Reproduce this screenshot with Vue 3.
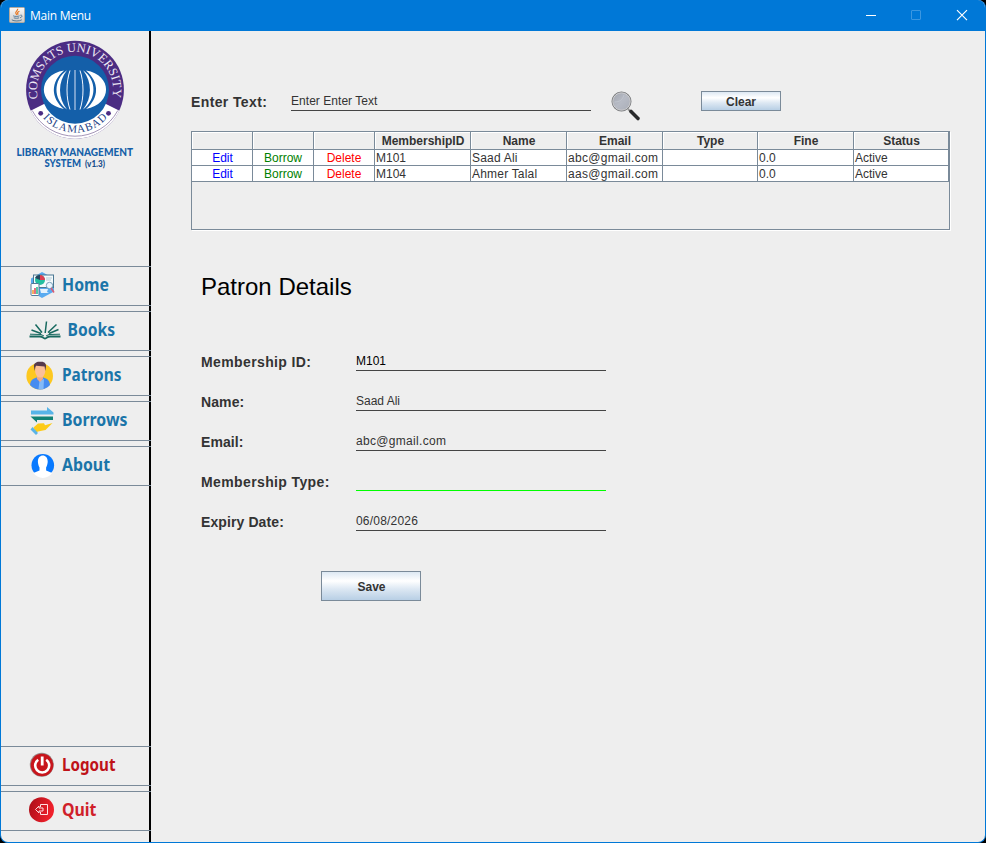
<script setup>
const nav = [
  { id: 'home', label: 'Home', x: 62, w: 47 },
  { id: 'books', label: 'Books', x: 67.5, w: 47.5 },
  { id: 'patrons', label: 'Patrons', x: 62, w: 59.5 },
  { id: 'borrows', label: 'Borrows', x: 62, w: 65.5 },
  { id: 'about', label: 'About', x: 62, w: 48 },
]
const exits = [
  { id: 'logout', label: 'Logout', x: 62, w: 53.5, color: '#bf1218' },
  { id: 'quit', label: 'Quit', x: 62, w: 34.5, color: '#d01f2a' },
]
const headers = ['', '', '', 'MembershipID', 'Name', 'Email', 'Type', 'Fine', 'Status']
const rows = [
  ['M101', 'Saad Ali', 'abc@gmail.com', '', '0.0', 'Active'],
  ['M104', 'Ahmer Talal', 'aas@gmail.com', '', '0.0', 'Active'],
]
const fields = [
  { label: 'Membership ID:', value: 'M101', cls: 'dark', wide: true },
  { label: 'Name:', value: 'Saad Ali', cls: '' },
  { label: 'Email:', value: 'abc@gmail.com', cls: 'mail' },
  { label: 'Membership Type:', value: '', cls: 'active', wide: true },
  { label: 'Expiry Date:', value: '06/08/2026', cls: 'date' },
]
</script>

<template>
  <div class="window">
    <header class="titlebar">
      <svg class="java" width="16" height="16" viewBox="0 0 16 16">
        <defs>
          <linearGradient id="jv" x1="0" y1="0" x2="0" y2="1">
            <stop offset="0" stop-color="#fafafa" /><stop offset="1" stop-color="#c9c9c9" />
          </linearGradient>
        </defs>
        <rect x=".5" y=".5" width="15" height="15" rx="1" fill="url(#jv)" stroke="#b3aaa0" />
        <path d="M8.600 1.800c.8 1.600-2.800 2.600-1.700 4.600l1 1.400M10.400 4.200c-2 .8-2.300 1.700-1.200 3.400" fill="none" stroke="#e8761e" stroke-width="1.200" />
        <path d="M4.200 8.800c1 .8 5 .8 6.400 0M4.800 10.800c1.500.6 4 .6 5.200 0M2.800 12.800c2 1.600 8 1.500 10 0M11.300 8.200c2.600-.4 2.200 2-.4 2.600" fill="none" stroke="#49708f" stroke-width=".9" />
      </svg>
      <span class="title">Main Menu</span>
      <svg class="controls" width="120" height="30" viewBox="0 0 120 30">
        <path d="M6 15.500h10" stroke="#fff" />
        <rect x="51.500" y="10.500" width="9" height="9" rx=".5" fill="none" stroke="#3b97e1" />
        <path d="M97 10.200l10 10M107 10.200l-10 10" stroke="#fff" stroke-width="1.150" />
      </svg>
    </header>

    <div class="body">
      <aside class="sidebar">
        <svg class="brand" width="148" height="235" viewBox="1 31 148 235">
          <defs>
            <path id="arcTop" d="M38.200 99.700A38.100 38.100 0 1 1 111.800 99.700" />
            <path id="arcBottom" d="M36.200 107.800A42.800 42.800 0 0 0 113.800 107.800" />
            <clipPath id="disc"><circle cx="75" cy="89.700" r="49" /></clipPath>
          </defs>
          <circle cx="75" cy="89.700" r="48.900" fill="#4b2c83" />
          <path clip-path="url(#disc)" d="M27 112.500L45 103.500A34 34 0 0 0 105 103.500L123 112.500V145H27Z" fill="#fff" />
          <path d="M32.200 110.500A48.500 48.500 0 0 0 117.800 110.500" fill="none" stroke="#8d7aa5" stroke-width=".8" />
          <circle cx="75" cy="89.700" r="34" fill="#145fa9" />
          <g fill="none" stroke="#f4f8ff">
            <path d="M75 70v40" stroke="#8eb0d8" stroke-width="1.600" />
            <path d="M70 70.500C66 82 66 98 70 109.500" stroke-width="1" />
            <path d="M80 70.500C84 82 84 98 80 109.500" stroke-width="1" />
          </g>
          <g fill="#fff">
            <path d="M64 70.500C37.200 75 37.200 104 64 109C50.500 98 50.500 82 64 70.500Z" />
            <path d="M86 70.500C112.800 75 112.800 104 86 109C99.500 98 99.500 82 86 70.500Z" />
            <path d="M67 70.200C53 80 53 99 67 109.500C57.700 98 57.700 82 67 70.200Z" />
            <path d="M83 70.200C97 80 97 99 83 109.500C92.300 98 92.300 82 83 70.200Z" />
          </g>
          <circle cx="40.700" cy="113.300" r="2.400" fill="#4b2c83" />
          <circle cx="108.500" cy="113.300" r="2.400" fill="#4b2c83" />
          <text class="ring" fill="#eee9f5" font-size="12.500"><textPath href="#arcTop" startOffset="1" textLength="136">COMSATS UNIVERSITY</textPath></text>
          <text class="ring" fill="#1d3f86" font-size="11"><textPath href="#arcBottom" startOffset="12" textLength="73">ISLAMABAD</textPath></text>
          <text class="caption" x="16.500" y="155.500" textLength="116.500" lengthAdjust="spacingAndGlyphs">LIBRARY MANAGEMENT</text>
          <text class="caption" x="44.500" y="167" textLength="36.500" lengthAdjust="spacingAndGlyphs">SYSTEM</text>
          <text class="caption ver" x="85" y="167" textLength="20" lengthAdjust="spacingAndGlyphs">(v1.3)</text>
        </svg>

        <nav class="group">
          <button v-for="n in nav" :key="n.id" class="nav">
            <svg width="150" height="38" viewBox="1 0 150 38">
              <g v-if="n.id === 'home'">
                <path d="M42 5l12 6.500v13L42 31l-11-6.500v-13z" fill="#58aaf0" />
                <rect x="33.500" y="8" width="20" height="12.500" fill="#f4fafc" stroke="#4b7792" />
                <circle cx="40" cy="13" r="5" fill="#23bfa0" />
                <path d="M40 13V8a5 5 0 0 1 5 5z" fill="#df3e52" /><path d="M40 13l-5-2a5 5 0 0 1 5-3z" fill="#24445f" />
                <path d="M46 11h6M46 13h5" stroke="#b5cad5" />
                <circle cx="49.500" cy="18.500" r="3.200" fill="#eaf6ff" stroke="#5f8da9" stroke-width=".8" />
                <path d="M51 21l3 4.500" stroke="#e05a70" stroke-width="1.500" />
                <path d="M40 22h8l-1 3 2 1h-8z" fill="#e4f1fc" />
                <rect x="31" y="16.500" width="8" height="12" rx="1" fill="#fff" stroke="#527b99" />
                <path d="M33 27v-4" stroke="#f49c38" stroke-width="1.600" /><path d="M35 27v-6" stroke="#df4d65" stroke-width="1.600" /><path d="M37 27v-7" stroke="#2ebd91" stroke-width="1.600" />
              </g>
              <g v-else-if="n.id === 'books'" fill="none" stroke="#17695f">
                <path d="M29.500 24.500h10.500c3 0 3 2 5 2s2-2 5-2h10.500" stroke-width="1.800" />
                <path d="M30 22.200l11 .3 3 1.500M60 22.200l-11 .3-3 1.500" stroke-width="1" />
                <path d="M35.500 12.500l6.500 8M31.500 18l9.500 3.500M46.500 9.500l-1.300 11.500M56.500 12.500l-8.500 8M58.500 17.500l-9.500 4" stroke-width="1.500" />
              </g>
              <g v-else-if="n.id === 'patrons'">
                <circle cx="39.700" cy="19" r="13.300" fill="#fdc820" />
                <path d="M30 28c.5-5 3-6.500 6.500-7.500h7c3.500 1 6 2.500 6.500 7.500a13.300 13.300 0 0 1-20 0z" fill="#468cf0" />
                <path d="M39.500 24l-1 8.200h5L44 22z" fill="#83baf8" />
                <path d="M37 16h6v6l-3 3-3-3z" fill="#f3aa83" />
                <path d="M35.200 8h10v7q-1 5.500-5 5.500t-5-5.500z" fill="#fabf99" />
                <path d="M34.700 14l-.8-5C34 6 37 4.300 40 4.800c4-.8 6.500 1.500 6 5l-.8 4.200-.6-4.500-8.500-.7-.7 1.200z" fill="#55394c" />
              </g>
              <g v-else-if="n.id === 'borrows'">
                <path d="M31 8.500h16V5l6.500 5.500v2H31z" fill="#57b4e8" />
                <path d="M53 14.500H30.500l6.500 6v-2.500h16z" fill="#128276" />
                <path d="M33.500 25.500l4.500-4 6-.3 1 2 7.500-2.200-7 7-7.500 1.500-2 1z" fill="#fdcb19" />
                <path d="M32.500 25l5.500 6-2 2-5.500-5.500z" fill="#5ab4e8" />
              </g>
              <g v-else>
                <circle cx="42.800" cy="18.300" r="11.300" fill="#0879ff" />
                <path d="M39.500 20.500c-3.500-7-.8-12 3.300-12s6.800 5 3.300 12v3l6.100 2.500a11.500 11.500 0 0 1-18.800 0l6.100-2.500z" fill="#fff" />
              </g>
              <text :x="n.x" y="24" :textLength="n.w" lengthAdjust="spacingAndGlyphs" fill="#1b75a9">{{ n.label }}</text>
            </svg>
          </button>
        </nav>

        <nav class="group exits">
          <button v-for="n in exits" :key="n.id" class="nav">
            <svg width="150" height="38" viewBox="1 0 150 38">
              <defs>
                <linearGradient :id="'rg-' + n.id" x1="0" y1="0" x2="1" y2=".3">
                  <stop offset="0" stop-color="#a90e18" /><stop offset="1" stop-color="#f0202b" />
                </linearGradient>
              </defs>
              <g v-if="n.id === 'logout'">
                <circle cx="41.800" cy="17.800" r="12" fill="#98898a" />
                <circle cx="42" cy="18" r="11.300" fill="#c8151c" />
                <path d="M38.200 12.700a7 7 0 1 0 8 0" fill="none" stroke="#fff" stroke-width="2.600" />
                <path d="M42.200 9.500v9" stroke="#fff" stroke-width="2.800" />
              </g>
              <g v-else>
                <circle cx="41.500" cy="17.700" r="12.500" fill="url(#rg-quit)" />
                <path d="M40.500 15v-2.500h7v10h-7V20M43 16h-4v-2l-3.500 3.500L39 21v-2h4z" fill="none" stroke="#ffdfe1" stroke-width="1" />
              </g>
              <text :x="n.x" y="24" :textLength="n.w" lengthAdjust="spacingAndGlyphs" :fill="n.color">{{ n.label }}</text>
            </svg>
          </button>
        </nav>
      </aside>

      <main class="content">
        <div class="search">
          <label class="lbl wide">Enter Text:</label>
          <div class="input">Enter Enter Text</div>
          <svg class="lens" width="30" height="31" viewBox="0 0 30 31">
            <defs>
              <linearGradient id="gl" x1="0" y1="0" x2="1" y2="1">
                <stop offset="0" stop-color="#a0a4ad" /><stop offset=".5" stop-color="#b7bbc5" /><stop offset="1" stop-color="#a9adb7" />
              </linearGradient>
            </defs>
            <path d="M17 18l3 3" stroke="#999" stroke-width="2" />
            <path d="M20 20.500l7 7" stroke="#292a2b" stroke-width="3.600" stroke-linecap="round" />
            <circle cx="10.500" cy="10.500" r="9.200" fill="url(#gl)" stroke="#77797c" stroke-width="1.600" />
            <circle cx="10.500" cy="10.500" r="8.700" fill="none" stroke="#dcdddf" stroke-width=".9" />
            <path d="M3.500 11c5 0 8-2 9.500-7" fill="none" stroke="#c3c8d0" stroke-width=".8" />
          </svg>
          <button class="btn clear">Clear</button>
        </div>

        <div class="pane">
          <div class="row head">
            <div v-for="(h, i) in headers" :key="i" class="cell">{{ h }}</div>
          </div>
          <div v-for="r in rows" :key="r[0]" class="row">
            <div class="cell act edit">Edit</div>
            <div class="cell act borrow">Borrow</div>
            <div class="cell act delete">Delete</div>
            <div v-for="(c, i) in r" :key="i" class="cell" :class="{ mail: i === 2, name: i === 1 }">{{ c }}</div>
          </div>
        </div>

        <h1>Patron Details</h1>
        <div class="form">
          <div v-for="f in fields" :key="f.label" class="field">
            <label class="lbl" :class="{ wide: f.wide }">{{ f.label }}</label>
            <div class="input" :class="f.cls">{{ f.value }}</div>
          </div>
        </div>
        <button class="btn save">Save</button>
      </main>
    </div>
  </div>
</template>

<style>
body { background: #000; }
</style>
<style scoped>
* { box-sizing: border-box; }
.window {
  width: 986px; height: 843px; background: #eee; border: 1px solid #0078d7; border-top: 0;
  border-radius: 8px; overflow: hidden; display: flex; flex-direction: column;
  font: 12px/14px "Liberation Sans", Arial, sans-serif; color: #333;
}
.titlebar { height: 31px; flex: none; background: #0078d7; display: flex; align-items: flex-start; padding-left: 8px; color: #fff; }
.java { margin-top: 7px; }
.title { font: 12px/16px "Open Sans", "Noto Sans", sans-serif; letter-spacing: -.25px; margin: 8px 0 0 5px; }
.controls { margin-left: auto; margin-right: 5px; }
.body { flex: 1; display: flex; min-height: 0; }
.sidebar { width: 150px; flex: none; display: flex; flex-direction: column; background: linear-gradient(90deg, transparent 148px, #000 148px); }
.brand { display: block; flex: none; }
.ring { font-family: "Liberation Serif", serif; }
.caption { font: 900 11px Lato, sans-serif; fill: #1560a8; }
.ver { font-size: 10px; fill: #174d8b; }
.group { display: flex; flex-direction: column; gap: 5px; }
.exits { margin-top: auto; margin-bottom: 11px; }
.nav { height: 40px; width: 150px; padding: 0; border: 0 solid #7a8a99; border-width: 1px 0; background: none; display: block; }
.nav svg { display: block; }
.nav text { font: bold 17px "Noto Sans", "Open Sans", sans-serif; }
.content { flex: 1; padding: 60px 0 0 40px; }
.search { display: flex; align-items: flex-start; height: 40px; }
.lbl { font-weight: bold; font-size: 14px; line-height: 16px; letter-spacing: .1px; white-space: nowrap; }
.lbl.wide { letter-spacing: .38px; }
.search .lbl { width: 100px; margin-top: 3px; }
.input { height: 20px; border-bottom: 1px solid #444; line-height: 14px; padding-top: 3px; }
.search .input { width: 300px; letter-spacing: .04px; }
.lens { margin: 0 0 0 20px; }
.btn { font: bold 12px/14px "Liberation Sans", Arial, sans-serif; color: #333; border: 1px solid #7a8a99; border-radius: 0; padding: 1px 0 0; display: block; background: linear-gradient(#dde8f3, #fff 32%, #dde8f3 60%, #b8cfe5); }
.clear { width: 80px; height: 20px; margin-left: 60px; }
.pane { width: 759px; height: 99px; border: 1px solid #7a8a99; box-shadow: 1px 1px 0 #fff; }
.row { display: grid; grid-template-columns: 61px 61px 61px 96px 96px 96px 95px 96px 95px; height: 16px; background: #fff; }
.cell { border-right: 1px solid #7a8a99; border-bottom: 1px solid #7a8a99; padding-left: 1px; white-space: nowrap; line-height: 17px; overflow: hidden; }
.head { height: 18px; background: #eee; }
.head .cell { font-weight: bold; text-align: center; box-shadow: inset 1px 1px 0 #fff; line-height: 19px; }
.act { text-align: center; padding-left: 0; }
.mail { letter-spacing: .32px; }
.name { letter-spacing: .2px; }
.date { letter-spacing: .2px; }
.edit { color: #00f; padding-left: 1px; }
.borrow { color: #008000; }
.delete { color: #f00; }
h1 { font-size: 24px; font-weight: normal; line-height: 28px; color: #000; margin: 43px 0 0 10px; }
.form { margin: 50px 0 0 10px; display: flex; flex-direction: column; gap: 20px; }
.field { display: flex; height: 20px; }
.field .lbl { width: 155px; padding-top: 3px; }
.field .input { width: 250px; }
.dark { color: #000; }
.input.active { border-color: #0f0; }
.save { width: 100px; height: 30px; margin: 40px 0 0 130px; padding: 2px 0 0 1px; }
</style>
